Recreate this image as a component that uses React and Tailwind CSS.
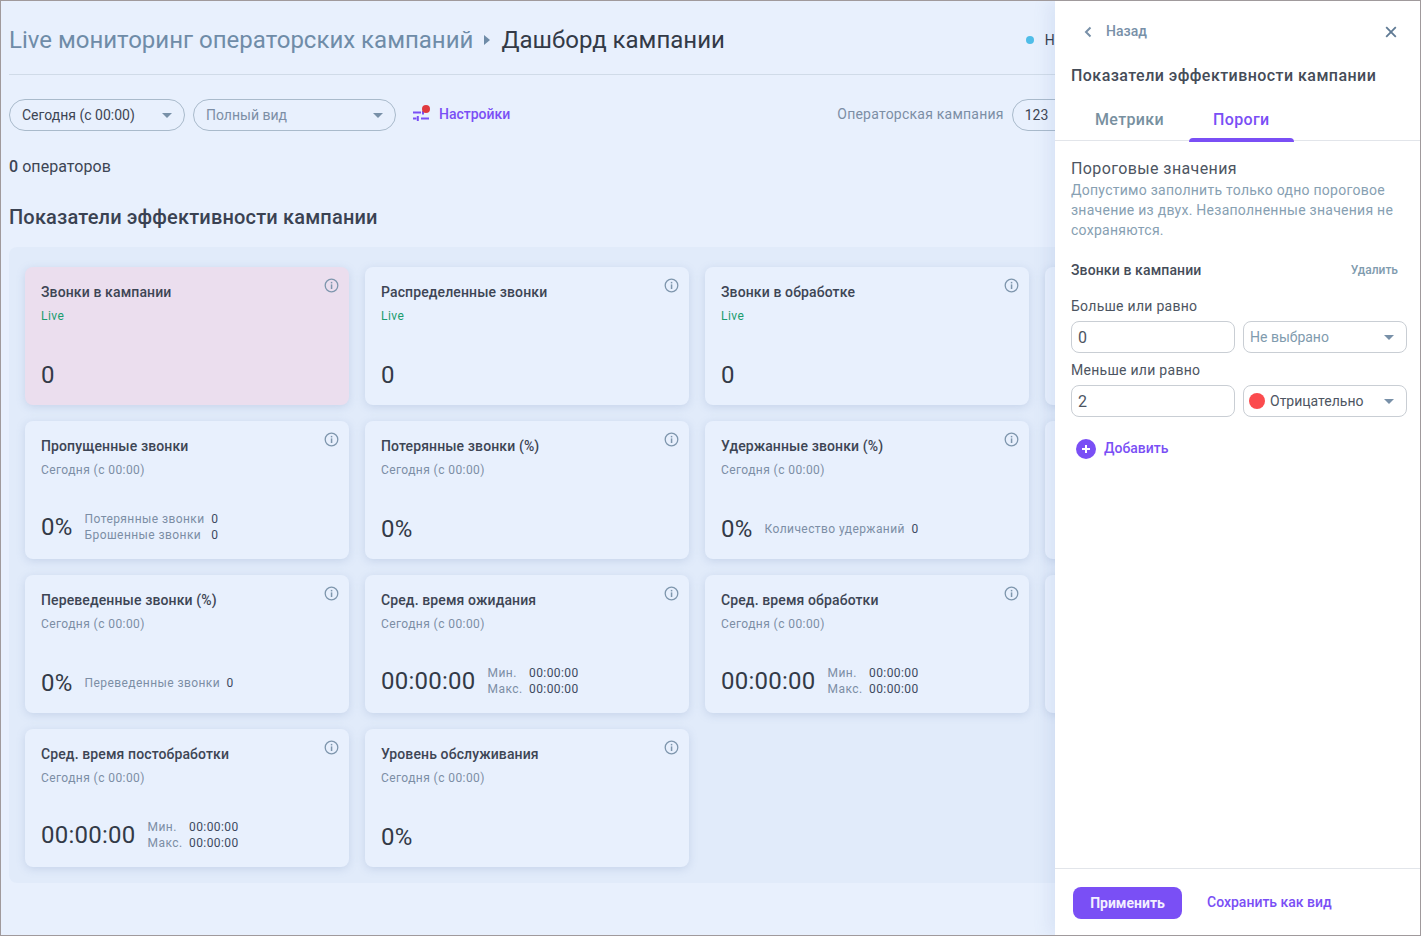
import React from "react";

const Caret = ({ className = "" }) => (
  <svg width="10" height="5" viewBox="0 0 10 5" className={className}>
    <path d="M0 0h10L5 5z" fill="#7890a8" />
  </svg>
);

const Info = () => (
  <svg width="15" height="15" viewBox="0 0 15 15" fill="none" className="absolute top-[11px] right-[10.5px]">
    <circle cx="7.5" cy="7.5" r="6.3" stroke="#7e96ad" strokeWidth="1.3" />
    <rect x="6.8" y="6.4" width="1.5" height="4.6" fill="#7e96ad" />
    <rect x="6.8" y="3.9" width="1.5" height="1.5" fill="#7e96ad" />
  </svg>
);

const Card = ({ title, live, pink, value, children }) => (
  <div className={`relative h-[138px] rounded-lg shadow-[0_2px_8px_rgba(120,145,190,0.25)] pl-4 pt-[16px] ${pink ? "bg-[#ebdeee]" : "bg-[#e8f0fd]"}`}>
    <Info />
    <div className="text-[14px] leading-[18px] font-medium text-[#3d4554] tracking-[0.12px]">{title}</div>
    <div className={`mt-[7px] text-[12px] leading-[16px] tracking-[0.42px] ${live ? "text-[#1a9c6e]" : "text-[#7c8ea5]"}`}>
      {live ? "Live" : "Сегодня (с 00:00)"}
    </div>
    <div className="absolute left-4 bottom-[16px] flex items-center gap-3">
      <span className="text-[24px] leading-[28px] text-[#333a47] tracking-[0.25px]">{value}</span>
      {children}
    </div>
  </div>
);

const Side = ({ rows }) => (
  <div className="text-[12px] leading-[16px] tracking-[0.42px] grid grid-cols-[auto_auto] gap-x-[6.5px] text-[#7c8ea5]">
    {rows.map(([a, b]) => (
      <React.Fragment key={a}>
        <span>{a}</span>
        <span className="text-[#3d4a60]">{b}</span>
      </React.Fragment>
    ))}
  </div>
);

const Times = () => (
  <Side rows={[["Мин.", "00:00:00"], ["Макс.", "00:00:00"]]} />
);

const Peek = () => <div className="h-[138px] rounded-lg bg-[#e8f0fd] shadow-[0_2px_8px_rgba(120,145,190,0.25)]" />;

export default function App() {
  return (
    <div className="relative w-[1421px] h-[936px] overflow-hidden bg-[#e8f0fd] font-['Roboto',sans-serif] border border-[#a09a9c] box-border">
      <div className="w-[1500px] pl-2">
        <header className="h-[74px] flex items-center border-b border-[#d0dbe8] w-[1300px] pt-[5px]">
          <span className="text-[24px] text-[#6f8ca8]">Live мониторинг операторских кампаний</span>
          <svg width="6" height="10" viewBox="0 0 6 10" className="ml-[11px] mr-[11px]"><path d="M0 0l6 5-6 5z" fill="#6f8ca8" /></svg>
          <span className="text-[24px] text-[#333a47]">Дашборд кампании</span>
          <span className="ml-[301px] w-[8px] h-[8px] rounded-full bg-[#4fbde8]" />
          <span className="ml-[11px] text-[14px] text-[#333a47]">Н</span>
        </header>

        <div className="flex items-center mt-[24px] h-[32px] w-[1300px]">
          <div className="w-[176px] h-[32px] border border-[#a9bacb] rounded-full flex items-center justify-between pl-3 pr-[12px] text-[14px] text-[#3d4554]">
            <span>Сегодня (с 00:00)</span>
            <Caret />
          </div>
          <div className="ml-2 w-[203px] h-[32px] border border-[#a9bacb] rounded-full flex items-center justify-between pl-3 pr-[12px] text-[14px] text-[#7c8ea5]">
            <span>Полный вид</span>
            <Caret />
          </div>
          <div className="relative ml-[17px] w-[17px] h-[14px] -mt-[1px]">
            <svg width="17" height="14" viewBox="0 0 17 14">
              <path d="M0 4.5h8M0 10.5h3.5M8 10.5h8" stroke="#7a4ff5" strokeWidth="1.8" fill="none" />
              <path d="M4.8 8v5M10 3v3.4" stroke="#7a4ff5" strokeWidth="2" fill="none" />
            </svg>
            <span className="absolute -top-[3px] left-[9px] w-[8px] h-[8px] rounded-full bg-[#e0393e]" />
          </div>
          <span className="ml-[9px] text-[14px] font-medium text-[#7a4ff5] -mt-[2px]">Настройки</span>
          <span className="ml-[327px] text-[14px] text-[#7c8ea5] tracking-[0.23px] -mt-[2px]">Операторская кампания</span>
          <div className="ml-[8px] w-[120px] h-[32px] border border-[#a9bacb] rounded-full flex items-center pl-3 text-[14px] text-[#3d4554]">123</div>
        </div>

        <div className="mt-[26px] text-[16px] leading-[20px] text-[#3d4554] tracking-[0.05px]"><span className="font-medium">0</span> операторов</div>
        <h2 className="mt-[28px] text-[20px] leading-[24px] font-medium text-[#3a4252] tracking-[0.17px]">Показатели эффективности кампании</h2>

        <section className="mt-[18px] w-[1400px] h-[636px] rounded-lg bg-[#e1ebfa] pl-4 pt-5 grid grid-cols-[repeat(4,324px)] auto-rows-[138px] gap-4">
          <Card title="Звонки в кампании" live pink value="0" />
          <Card title="Распределенные звонки" live value="0" />
          <Card title="Звонки в обработке" live value="0" />
          <Peek />
          <Card title="Пропущенные звонки" value="0%">
            <Side rows={[["Потерянные звонки", "0"], ["Брошенные звонки", "0"]]} />
          </Card>
          <Card title="Потерянные звонки (%)" value="0%" />
          <Card title="Удержанные звонки (%)" value="0%">
            <Side rows={[["Количество удержаний", "0"]]} />
          </Card>
          <Peek />
          <Card title="Переведенные звонки (%)" value="0%">
            <Side rows={[["Переведенные звонки", "0"]]} />
          </Card>
          <Card title="Сред. время ожидания" value="00:00:00"><Times /></Card>
          <Card title="Сред. время обработки" value="00:00:00"><Times /></Card>
          <Peek />
          <Card title="Сред. время постобработки" value="00:00:00"><Times /></Card>
          <Card title="Уровень обслуживания" value="0%" />
        </section>
      </div>

      <aside className="absolute top-0 bottom-0 right-0 w-[365px] bg-white shadow-[-6px_0_16px_rgba(100,130,190,0.12)] flex flex-col">
        <div className="h-[60px] flex items-center justify-between pl-[29px] pr-[23px] pt-[1px]">
          <div className="flex items-center">
            <svg width="8" height="12" viewBox="0 0 8 12" fill="none"><path d="M6.5 1.5L2 6l4.5 4.5" stroke="#7890a8" strokeWidth="2" /></svg>
            <span className="ml-[14px] text-[14px] font-medium text-[#7890a8]">Назад</span>
          </div>
          <svg width="12" height="12" viewBox="0 0 12 12" fill="none"><path d="M1.2 1.2l9.6 9.6M10.8 1.2l-9.6 9.6" stroke="#5f7a94" strokeWidth="1.8" /></svg>
        </div>
        <div className="pl-4 text-[16px] leading-[20px] font-medium text-[#454c58] tracking-[0.45px] mt-[5px]">Показатели эффективности кампании</div>

        <div className="mt-[13px] h-[42px] flex border-b border-[#e2e5ea] relative">
          <div className="ml-[40px] pt-[10px] text-[16px] leading-[22px] font-medium text-[#7890a0] tracking-[0.35px]">Метрики</div>
          <div className="relative ml-[49px] pt-[10px] text-[16px] leading-[22px] font-medium text-[#7a4ff5] tracking-[0.35px]">
            Пороги
            <span className="absolute -left-[24px] -right-[25px] -bottom-[2px] h-[4px] rounded-t-[4px] bg-[#7a4ff5]" />
          </div>
        </div>

        <div className="pl-4 pr-[13px] flex-1 flex flex-col">
          <div className="mt-[18px] text-[16px] leading-[20px] text-[#4d5562] tracking-[0.4px]">Пороговые значения</div>
          <div className="mt-[1px] pr-[3px] text-[14px] leading-[20px] text-[#87a0b2] tracking-[0.26px]">Допустимо заполнить только одно пороговое значение из двух. Незаполненные значения не сохраняются.</div>

          <div className="mt-[20px] flex items-center justify-between pr-[9px]">
            <span className="text-[14px] leading-[20px] font-medium text-[#454c58] tracking-[0.12px]">Звонки в кампании</span>
            <span className="text-[12px] leading-[20px] font-medium text-[#7f9bae]">Удалить</span>
          </div>

          <div className="mt-[16px] text-[14px] leading-[20px] text-[#4d5562] tracking-[0.28px]">Больше или равно</div>
          <div className="mt-[5px] flex gap-2">
            <div className="w-[164px] h-[32px] border border-[#c9ced4] rounded-[8px] flex items-center pl-[6px] pt-[1px] text-[16px] text-[#4d5562]">0</div>
            <div className="w-[164px] h-[32px] border border-[#c9ced4] rounded-[8px] flex items-center justify-between pl-[6px] pr-[12px] text-[14px] text-[#7f9bae]">
              <span>Не выбрано</span>
              <Caret />
            </div>
          </div>

          <div className="mt-[7px] text-[14px] leading-[20px] text-[#4d5562] tracking-[0.28px]">Меньше или равно</div>
          <div className="mt-[5px] flex gap-2">
            <div className="w-[164px] h-[32px] border border-[#c9ced4] rounded-[8px] flex items-center pl-[6px] pt-[1px] text-[16px] text-[#4d5562]">2</div>
            <div className="w-[164px] h-[32px] border border-[#c9ced4] rounded-[8px] flex items-center justify-between pl-[5px] pr-[12px] text-[14px] text-[#4d5562]">
              <span className="flex items-center gap-[5px]">
                <span className="w-4 h-4 rounded-full bg-[#fb4b4e]" />
                Отрицательно
              </span>
              <Caret />
            </div>
          </div>

          <div className="mt-[21px] ml-[5px] flex items-center gap-[8px]">
            <svg width="20" height="20" viewBox="0 0 20 20"><circle cx="10" cy="10" r="10" fill="#7a4ff5" /><path d="M10 6v8M6 10h8" stroke="#fff" strokeWidth="2" /></svg>
            <span className="text-[14px] font-medium text-[#7a4ff5]">Добавить</span>
          </div>
        </div>

        <div className="h-[67px] border-t border-[#e2e5ea] flex items-center pl-[18px]">
          <div className="mt-[2px] w-[109px] h-[32px] rounded-[8px] bg-[#7a4ff5] flex items-center justify-center text-[14px] font-bold text-[#f3f0ff]">Применить</div>
          <span className="ml-[25px] text-[14px] font-medium text-[#7a4ff5]">Сохранить как вид</span>
        </div>
      </aside>
    </div>
  );
}
